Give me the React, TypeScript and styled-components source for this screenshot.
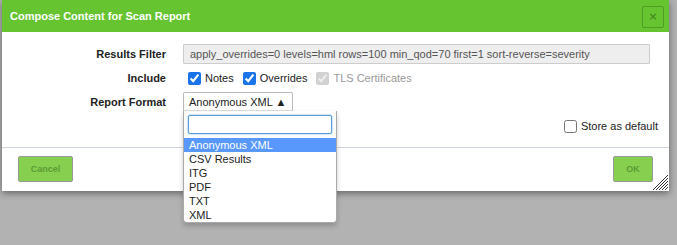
import React from 'react';
import styled, { createGlobalStyle } from 'styled-components';

const GlobalStyle = createGlobalStyle`
  html, body {
    margin: 0;
    padding: 0;
    background: #b2b2b2;
    font-family: "Liberation Sans", Arial, sans-serif;
    font-size: 11px;
    color: #222;
  }
  * { box-sizing: border-box; }
`;

const Page = styled.div`
  width: 677px;
  height: 245px;
  padding-left: 2px;
  overflow: hidden;
`;

const Dialog = styled.div`
  position: relative;
  width: 667px;
  background: #fff;
  box-shadow: 0 2px 7px rgba(0, 0, 0, 0.45);
`;

const TitleBar = styled.div`
  height: 32px;
  background: #66c430;
  display: flex;
  align-items: center;
  justify-content: space-between;
  padding: 0 5px 0 8px;
`;

const Title = styled.span`
  color: #fff;
  font-weight: bold;
  font-size: 11px;
`;

const CloseButton = styled.button`
  width: 22px;
  height: 22px;
  margin-top: 1px;
  padding: 0;
  background: transparent;
  border: 1px solid #4f9d24;
  border-radius: 2px;
  color: #3f7f1f;
  font-family: "DejaVu Sans", sans-serif;
  font-size: 11px;
  line-height: 18px;
  cursor: pointer;
`;

const Content = styled.div`
  padding: 12px 11px 11px 0;
  display: flex;
  flex-direction: column;
  gap: 4px;
`;

const Row = styled.div<{ $right?: boolean }>`
  height: 20px;
  display: flex;
  align-items: center;
  gap: 4px;
  justify-content: ${p => (p.$right ? 'flex-end' : 'flex-start')};
`;

const Label = styled.div`
  width: 164px;
  margin-right: 13px;
  text-align: right;
  font-weight: bold;
`;

const FilterInput = styled.input`
  width: 467px;
  height: 20px;
  padding: 0 6px;
  background: #eee;
  border: 1px solid #ccc;
  border-radius: 1px;
  color: #555;
  font-family: "Liberation Sans", Arial, sans-serif;
  font-size: 11px;
`;

const CheckLabel = styled.label<{ $disabled?: boolean }>`
  display: flex;
  align-items: center;
  color: ${p => (p.$disabled ? '#999' : '#222')};
`;

const Check = styled.input`
  width: 13px;
  height: 13px;
  margin: 0 4px 0 5px;
  accent-color: #1a73e8;
`;

const SelectWrap = styled.div`
  position: relative;
`;

const SelectBox = styled.div`
  height: 19px;
  width: 110px;
  margin-top: -1px;
  padding: 0 5px;
  display: flex;
  align-items: center;
  border: 1px solid #bbb;
  border-bottom-color: #ddd;
  border-radius: 2px 2px 0 0;
  background: #fff;
  white-space: nowrap;
`;

const Dropdown = styled.div`
  position: absolute;
  left: 0;
  top: 100%;
  width: 154px;
  background: #fff;
  border: 1px solid #aaa;
  border-top: none;
  border-radius: 0 0 4px 4px;
  box-shadow: 0 3px 5px rgba(0, 0, 0, 0.2);
  z-index: 10;
`;

const SearchBox = styled.div`
  padding: 4px;
`;

const SearchInput = styled.input`
  width: 144px;
  height: 19px;
  border: 1px solid #5b9dd9;
  border-radius: 2px;
  box-shadow: 0 0 2px #5b9dd9;
  outline: none;
`;

const Option = styled.div<{ $active?: boolean }>`
  height: 14px;
  line-height: 14px;
  padding-left: 5px;
  background: ${p => (p.$active ? '#5897fb' : 'transparent')};
  color: ${p => (p.$active ? '#fff' : '#222')};
`;

const Footer = styled.div`
  border-top: 1px solid #ccd3da;
  height: 44px;
  padding: 8px 16px 0 16px;
  display: flex;
  justify-content: space-between;
  align-items: flex-start;
`;

const Button = styled.button<{ $w: number }>`
  width: ${p => p.$w}px;
  height: 26px;
  background: #87d04f;
  border: 1px solid #999;
  border-radius: 2px;
  color: #5c9b35;
  font-family: "Liberation Sans", Arial, sans-serif;
  font-size: 9px;
  font-weight: bold;
  padding: 0;
  cursor: pointer;
`;

const ResizeHandle = styled.svg`
  position: absolute;
  right: 1px;
  bottom: 1px;
`;

const formats = ['Anonymous XML', 'CSV Results', 'ITG', 'PDF', 'TXT', 'XML'];

export default function App() {
  return (
    <Page>
      <GlobalStyle />
      <Dialog>
        <TitleBar>
          <Title>Compose Content for Scan Report</Title>
          <CloseButton>×</CloseButton>
        </TitleBar>
        <Content>
          <Row>
            <Label>Results Filter</Label>
            <FilterInput
              readOnly
              value="apply_overrides=0 levels=hml rows=100 min_qod=70 first=1 sort-reverse=severity"
            />
          </Row>
          <Row>
            <Label>Include</Label>
            <CheckLabel>
              <Check type="checkbox" defaultChecked />
              Notes
            </CheckLabel>
            <CheckLabel>
              <Check type="checkbox" defaultChecked />
              Overrides
            </CheckLabel>
            <CheckLabel $disabled>
              <Check type="checkbox" defaultChecked disabled />
              TLS Certificates
            </CheckLabel>
          </Row>
          <Row>
            <Label>Report Format</Label>
            <SelectWrap>
              <SelectBox>Anonymous XML ▲</SelectBox>
              <Dropdown>
                <SearchBox>
                  <SearchInput />
                </SearchBox>
                {formats.map((f, i) => (
                  <Option key={f} $active={i === 0}>
                    {f}
                  </Option>
                ))}
              </Dropdown>
            </SelectWrap>
          </Row>
          <Row $right>
            <CheckLabel>
              <Check type="checkbox" />
              Store as default
            </CheckLabel>
          </Row>
        </Content>
        <Footer>
          <Button $w={55}>Cancel</Button>
          <Button $w={40}>OK</Button>
        </Footer>
        <ResizeHandle width="16" height="16" viewBox="0 0 16 16">
          <g stroke="#333" strokeWidth="1">
            <line x1="16" y1="1" x2="1" y2="16" />
            <line x1="16" y1="4" x2="4" y2="16" />
            <line x1="16" y1="7" x2="7" y2="16" />
            <line x1="16" y1="10" x2="10" y2="16" />
            <line x1="16" y1="13" x2="13" y2="16" />
          </g>
        </ResizeHandle>
      </Dialog>
    </Page>
  );
}
